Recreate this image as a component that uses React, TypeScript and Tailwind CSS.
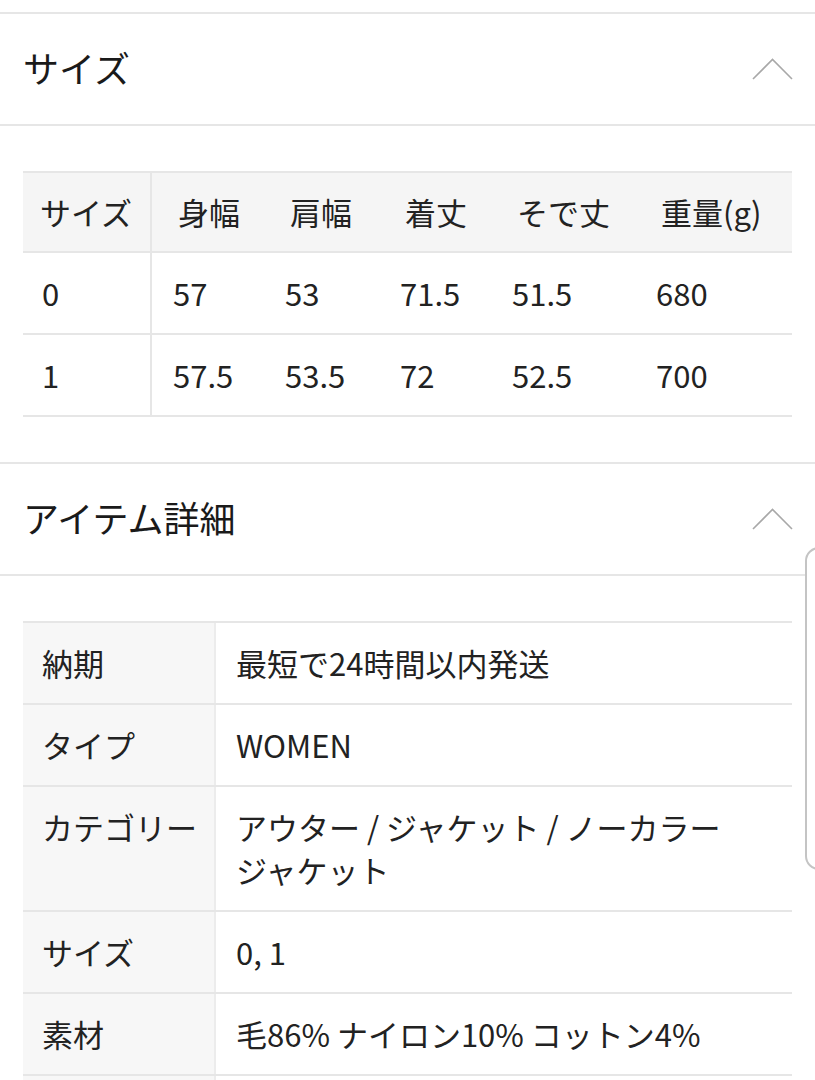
import React from 'react';

const sizeHead = ['サイズ', '身幅', '肩幅', '着丈', 'そで丈', '重量(g)'];
const sizeRows = [
    ['0', '57', '53', '71.5', '51.5', '680'],
    ['1', '57.5', '53.5', '72', '52.5', '700'],
];

const details: [string, string][] = [
    ['納期', '最短で24時間以内発送'],
    ['タイプ', 'WOMEN'],
    ['カテゴリー', 'アウター / ジャケット / ノーカラージャケット'],
    ['サイズ', '0, 1'],
    ['素材', '毛86% ナイロン10% コットン4%'],
    ['', ''],
];

const cols = 'grid grid-cols-[129px_112px_115px_112px_144px_1fr]';

const Chevron: React.FC = () => (
    <svg width="41" height="22" viewBox="0 0 41 22" fill="none">
        <path d="M1 21 L20.5 1.5 L40 21" stroke="#a8a8a8" strokeWidth="1.6" />
    </svg>
);

const SectionHeader: React.FC<{ title: string }> = ({ title }) => (
    <div className="flex h-[112px] items-center justify-between border-b-2 border-[#e6e6e6] pl-[23px] pr-[22px]">
        <h2 className="mb-[5px] text-[36px] leading-none text-[#1a1a1a]">{title}</h2>
        <Chevron />
    </div>
);

const App: React.FC = () => {
    return (
        <div className="relative h-[1080px] w-[815px] overflow-hidden bg-white font-['Noto_Sans_CJK_JP','Noto_Sans',sans-serif] text-[#222]">
            <div className="h-[14px] border-b-2 border-[#e6e6e6]" />
            <SectionHeader title="サイズ" />

            {/* size table */}
            <div className="pl-[23px] pr-[23px] pt-[45px] pb-[45px]">
                <div className="border-t-2 border-[#e6e6e6] text-[31px]">
                    <div className={`${cols} h-[80px] items-center bg-[#f5f5f5] border-b-2 border-[#e6e6e6]`}>
                        {sizeHead.map((h, i) => (
                            <div
                                key={h}
                                className={i === 0 ? 'flex h-full items-center border-r-2 border-[#e6e6e6] pl-[17px]' : 'pl-[26px]'}
                            >
                                {h}
                            </div>
                        ))}
                    </div>
                    {sizeRows.map((row) => (
                        <div key={row[0]} className={`${cols} h-[82px] items-center border-b-2 border-[#e6e6e6]`}>
                            {row.map((v, i) => (
                                <div
                                    key={i}
                                    className={i === 0 ? 'flex h-full items-center border-r-2 border-[#e6e6e6] pl-[19px]' : 'pl-[21px]'}
                                >
                                    {v}
                                </div>
                            ))}
                        </div>
                    ))}
                </div>
            </div>

            <div className="border-t-2 border-[#e6e6e6]" />
            <SectionHeader title="アイテム詳細" />

            {/* item detail table */}
            <div className="pl-[23px] pr-[23px] pt-[45px]">
                <div className="border-t-2 border-[#e6e6e6] text-[31px]">
                    {details.map(([k, v], i) => (
                        <div key={i} className="grid min-h-[82px] grid-cols-[193px_1fr] border-b-2 border-[#e6e6e6]">
                            <div className="border-r-2 border-[#ececec] bg-[#f7f7f7] pl-[19px] pt-[18px] pb-[19px] leading-[43px]">{k}</div>
                            <div className="pl-[20px] pr-[55px] pt-[18px] pb-[19px] leading-[43px]">{v}</div>
                        </div>
                    ))}
                </div>
            </div>

            {/* edge panel handle */}
            <div className="absolute right-[-12px] top-[547px] h-[323px] w-[22px] rounded-l-[14px] border-2 border-[#c4c4c4] bg-white" />
        </div>
    );
};

export default App;
